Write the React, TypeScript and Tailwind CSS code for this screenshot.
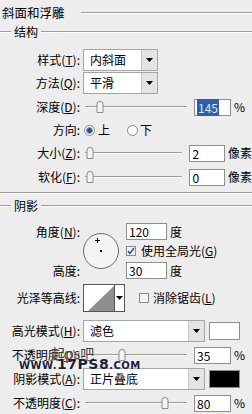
import React from 'react';

const Label = ({ children, className = '' }: { children: React.ReactNode; className?: string }) => (
  <span className={`w-[80px] shrink-0 text-right whitespace-nowrap ${className}`}>{children}</span>
);

const DownArrow = () => (
  <svg width="7" height="4" viewBox="0 0 7 4">
    <path d="M0 0 L7 0 L3.5 4 Z" fill="#000" />
  </svg>
);

function Select({ value, width }: { value: string; width: string }) {
  return (
    <div className={`${width} h-[22px] ml-[3px] flex border border-[#a5a5a5] bg-white`}>
      <span className="flex-1 pl-[6px] leading-[20px] whitespace-nowrap overflow-hidden">{value}</span>
      <span className="w-[16px] border-l border-[#c8c8c8] bg-[#e4e4e4] flex items-center justify-center">
        <DownArrow />
      </span>
    </div>
  );
}

function NumBox({ value, selected = false, className = '' }: { value: string; selected?: boolean; className?: string }) {
  return (
    <div className={`w-[37px] h-[17px] border border-[#8e8e8e] bg-white pl-[2px] leading-[15px] ${className}`}>
      {selected ? <span className="bg-[#2f5ea8] text-[#dfe8ff] px-[1px]">{value}</span> : value}
    </div>
  );
}

function Slider({ pos }: { pos: number }) {
  return (
    <div className="relative w-[102px] h-[14px] ml-[5px]">
      <div className="absolute left-0 right-0 top-[6px] h-[1px] bg-[#9a9a9a]" />
      <div className="absolute left-0 right-0 top-[7px] h-[1px] bg-white" />
      <svg className="absolute top-[1px]" style={{ left: pos }} width="8" height="12" viewBox="0 0 8 12">
        <path d="M1 3 Q1 0.5 4 0.5 Q7 0.5 7 3 L7 11.5 L1 11.5 Z" fill="#f4f4f4" stroke="#8a8a8a" />
      </svg>
    </div>
  );
}

function Radio({ on }: { on: boolean }) {
  return (
    <span className="w-[11px] h-[11px] rounded-full border border-[#8a8a8a] bg-white flex items-center justify-center">
      {on && <span className="w-[7px] h-[7px] rounded-full bg-[#2f4f7a] border border-[#7f9fc8]" />}
    </span>
  );
}

function Check({ on }: { on: boolean }) {
  return (
    <span className="w-[10px] h-[10px] border border-[#8a8a8a] bg-[#f6f6f6] flex items-center justify-center">
      {on && (
        <svg width="8" height="8" viewBox="0 0 8 8">
          <path d="M1 4 L3 6.5 L7 1" fill="none" stroke="#2a4fa0" strokeWidth="1.6" />
        </svg>
      )}
    </span>
  );
}

const Etched = ({ className = '' }: { className?: string }) => (
  <div className={`h-[2px] border-t border-[#9c9c9c] border-b-white border-b ${className}`} />
);

export default function App() {
  return (
    <div
      className="relative w-[252px] h-[414px] overflow-hidden bg-[#ededed] text-black text-[12px]"
      style={{ fontFamily: '"Noto Sans CJK SC", "Liberation Sans", sans-serif' }}
    >
      {/* 标题 */}
      <div className="h-[26px] flex items-center">
        <span className="ml-[2px] text-[12.5px] leading-[14px]">斜面和浮雕</span>
        <Etched className="flex-1 ml-[16px]" />
      </div>
      <div className="h-[12px] flex items-center">
        <Etched className="w-[11px]" />
        <span className="mx-[3px] leading-[12px]">结构</span>
        <Etched className="flex-1" />
      </div>

      <div className="mt-[11px] h-[22px] flex items-center">
        <Label>样式(<u>T</u>):</Label>
        <Select value="内斜面" width="w-[75px]" />
      </div>
      <div className="mt-[1px] h-[22px] flex items-center">
        <Label>方法(<u>Q</u>):</Label>
        <Select value="平滑" width="w-[75px]" />
      </div>
      <div className="mt-[2px] h-[22px] flex items-center">
        <Label>深度(<u>D</u>):</Label>
        <Slider pos={11} />
        <NumBox value="145" selected className="ml-[7px]" />
        <span className="ml-[3px]">%</span>
      </div>
      <div className="mt-[1px] h-[22px] flex items-center">
        <Label>方向:</Label>
        <span className="ml-[4px]"><Radio on /></span>
        <span className="ml-[3px]">上</span>
        <span className="ml-[17px]"><Radio on={false} /></span>
        <span className="ml-[2px]">下</span>
      </div>
      <div className="mt-[1px] h-[22px] flex items-center">
        <Label>大小(<u>Z</u>):</Label>
        <Slider pos={1} />
        <NumBox value="2" className="ml-[7px]" />
        <span className="ml-[3px] whitespace-nowrap">像素</span>
      </div>
      <div className="mt-[2px] h-[22px] flex items-center">
        <Label>软化(<u>F</u>):</Label>
        <Slider pos={1} />
        <NumBox value="0" className="ml-[7px]" />
        <span className="ml-[3px] whitespace-nowrap">像素</span>
      </div>

      <Etched className="mt-[4px]" />

      <div className="mt-[6px] h-[12px] flex items-center">
        <Etched className="w-[11px]" />
        <span className="mx-[3px] leading-[12px]">阴影</span>
        <Etched className="flex-1" />
      </div>

      {/* 角度 / 高度 */}
      <div className="mt-[10px] flex">
        <div className="w-[80px] flex flex-col">
          <Label className="h-[19px] leading-[19px] block">角度(<u>N</u>):</Label>
          <span className="h-[20px]" />
          <Label className="h-[19px] leading-[19px] block">高度:</Label>
        </div>
        <div className="ml-[3px] pt-[11px]">
          <div className="relative w-[36px] h-[36px] rounded-full border-[1.5px] border-[#6a6a78] bg-[#f4f4f4]">
            <span className="absolute left-[11px] top-[6px] w-[5px] h-[1px] bg-black" />
            <span className="absolute left-[13px] top-[4px] w-[1px] h-[5px] bg-black" />
            <span className="absolute left-[16px] top-[16px] w-[2px] h-[2px] bg-black" />
          </div>
        </div>
        <div className="ml-[7px] flex flex-col">
          <div className="h-[19px] flex items-center">
            <NumBox value="120" className="w-[41px]" />
            <span className="ml-[3px]">度</span>
          </div>
          <div className="h-[20px] flex items-center">
            <Check on />
            <span className="ml-[5px] whitespace-nowrap">使用全局光(<u>G</u>)</span>
          </div>
          <div className="h-[19px] flex items-center">
            <NumBox value="30" className="w-[41px]" />
            <span className="ml-[3px]">度</span>
          </div>
        </div>
      </div>

      {/* 光泽等高线 */}
      <div className="mt-[4px] h-[28px] flex items-center">
        <Label>光泽等高线:</Label>
        <div className="ml-[3px] w-[42px] h-[28px] flex border border-[#555]">
          <svg width="30" height="26" viewBox="0 0 30 26" className="bg-white">
            <path d="M4 26 L30 1 L30 26 Z" fill="#8f8f8f" />
          </svg>
          <span className="flex-1 border-l border-[#555] bg-white flex items-center justify-center">
            <DownArrow />
          </span>
        </div>
        <span className="ml-[14px]"><Check on={false} /></span>
        <span className="ml-[4px] whitespace-nowrap">消除锯齿(<u>L</u>)</span>
      </div>

      <div className="mt-[8px] h-[22px] flex items-center">
        <Label>高光模式(<u>H</u>):</Label>
        <Select value="滤色" width="w-[122px]" />
        <span className="ml-[4px] w-[31px] h-[18px] border border-[#8e8e8e] bg-white" />
      </div>
      <div className="mt-[2px] h-[22px] flex items-center">
        <Label>不透明度(<u>O</u>):</Label>
        <Slider pos={33} />
        <NumBox value="35" className="ml-[7px]" />
        <span className="ml-[3px]">%</span>
      </div>
      <div className="mt-[2px] h-[22px] flex items-center">
        <Label>阴影模式(<u>A</u>):</Label>
        <Select value="正片叠底" width="w-[122px]" />
        <span className="ml-[4px] w-[31px] h-[18px] border border-[#8e8e8e] bg-black" />
      </div>
      <div className="mt-[2px] h-[22px] flex items-center">
        <Label>不透明度(<u>C</u>):</Label>
        <Slider pos={76} />
        <NumBox value="80" className="ml-[7px]" />
        <span className="ml-[3px]">%</span>
      </div>

      {/* 水印 */}
      <span className="absolute left-[51px] top-[346px] text-[14px] leading-[15px] text-[#3a3a3a] [text-shadow:0_0_2px_#fff]">
        起ps吧
      </span>
      <span
        className="absolute left-[19px] top-[359px] text-[10px] leading-[11px] font-bold text-[#1c1c3c] tracking-[0.5px] [text-shadow:0_0_2px_#fff]"
        style={{ fontFamily: '"DejaVu Sans", sans-serif' }}
      >
        WWW.<span className="text-[14px]">17PS8</span>.COM
      </span>
    </div>
  );
}
